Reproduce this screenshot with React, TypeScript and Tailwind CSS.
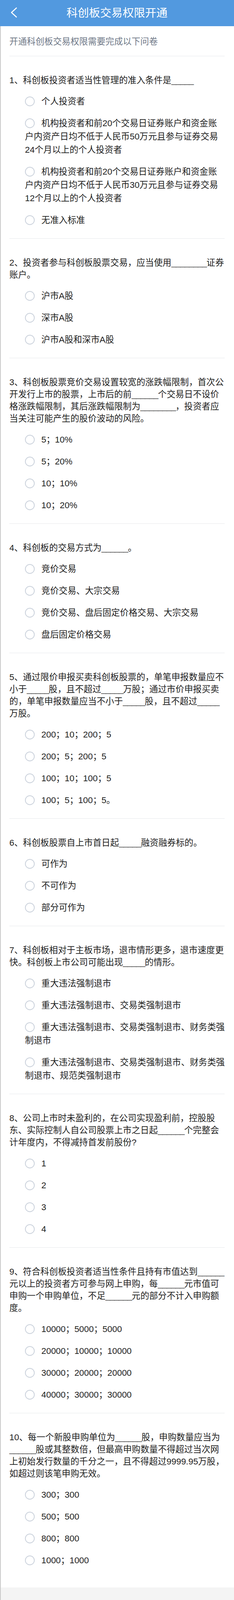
import React from "react";

type Q = { title: string; options: string[] };

const questions: Q[] = [
  {
    title: "1、科创板投资者适当性管理的准入条件是_____",
    options: [
      "个人投资者",
      "机构投资者和前20个交易日证券账户和资金账户内资产日均不低于人民币50万元且参与证券交易24个月以上的个人投资者",
      "机构投资者和前20个交易日证券账户和资金账户内资产日均不低于人民币30万元且参与证券交易12个月以上的个人投资者",
      "无准入标准",
    ],
  },
  {
    title: "2、投资者参与科创板股票交易，应当使用________证券账户。",
    options: ["沪市A股", "深市A股", "沪市A股和深市A股"],
  },
  {
    title:
      "3、科创板股票竞价交易设置较宽的涨跌幅限制，首次公开发行上市的股票，上市后的前______个交易日不设价格涨跌幅限制，其后涨跌幅限制为________，投资者应当关注可能产生的股价波动的风险。",
    options: ["5；10%", "5；20%", "10；10%", "10；20%"],
  },
  {
    title: "4、科创板的交易方式为______。",
    options: [
      "竞价交易",
      "竞价交易、大宗交易",
      "竞价交易、盘后固定价格交易、大宗交易",
      "盘后固定价格交易",
    ],
  },
  {
    title:
      "5、通过限价申报买卖科创板股票的，单笔申报数量应不小于_____股，且不超过_____万股；通过市价申报买卖的，单笔申报数量应当不小于_____股，且不超过_____万股。",
    options: ["200；10；200；5", "200；5；200；5", "100；10；100；5", "100；5；100；5。"],
  },
  {
    title: "6、科创板股票自上市首日起_____融资融券标的。",
    options: ["可作为", "不可作为", "部分可作为"],
  },
  {
    title: "7、科创板相对于主板市场，退市情形更多，退市速度更快。科创板上市公司可能出现_____的情形。",
    options: [
      "重大违法强制退市",
      "重大违法强制退市、交易类强制退市",
      "重大违法强制退市、交易类强制退市、财务类强制退市",
      "重大违法强制退市、交易类强制退市、财务类强制退市、规范类强制退市",
    ],
  },
  {
    title:
      "8、公司上市时未盈利的，在公司实现盈利前，控股股东、实际控制人自公司股票上市之日起______个完整会计年度内，不得减持首发前股份?",
    options: ["1", "2", "3", "4"],
  },
  {
    title:
      "9、符合科创板投资者适当性条件且持有市值达到______元以上的投资者方可参与网上申购，每______元市值可申购一个申购单位，不足______元的部分不计入申购额度。",
    options: ["10000；5000；5000", "20000；10000；10000", "30000；20000；20000", "40000；30000；30000"],
  },
  {
    title:
      "10、每一个新股申购单位为______股，申购数量应当为______股或其整数倍，但最高申购数量不得超过当次网上初始发行数量的千分之一，且不得超过9999.95万股，如超过则该笔申购无效。",
    options: ["300；300", "500；500", "800；800", "1000；1000"],
  },
];

function Title({ text }: { text: string }) {
  const parts = text.split(/(_+)/);
  return (
    <>
      {parts.map((p, i) =>
        p.startsWith("_") ? (
          <span key={i} className="tracking-[-1.2px]">
            {p}
          </span>
        ) : (
          <React.Fragment key={i}>{p}</React.Fragment>
        )
      )}
    </>
  );
}

export default function App() {
  return (
    <div className="w-[600px] font-['Liberation_Sans','Noto_Sans_CJK_SC',sans-serif] text-[#222]">
      <header className="h-[67px] bg-[#5299df] flex items-center relative">
        <svg
          className="absolute left-[27px] top-[19px]"
          width="17"
          height="26"
          viewBox="0 0 17 26"
          fill="none"
        >
          <polyline
            points="15,1.5 2.5,13 15,24.5"
            stroke="#ffffff"
            strokeWidth="2.6"
            strokeLinecap="round"
            strokeLinejoin="round"
          />
        </svg>
        <h1 className="flex-1 text-center text-white text-[28.8px] leading-none font-normal">
          科创板交易权限开通
        </h1>
      </header>

      <main className="bg-white shadow-[inset_2px_0_0_#c9c9c9]">
        <div className="px-6">
          <p className="pt-[25px] pb-[21px] leading-[30px] text-[22.4px] text-[#6f7887] border-b border-[#e6e8eb]">
            开通科创板交易权限需要完成以下问卷
          </p>
        </div>

        {questions.map((q, qi) => {
          const last = qi === questions.length - 1;
          return (
            <section key={qi} className="px-6">
              <div
                className={
                  last
                    ? "pt-[46px] pb-[41px]"
                    : "pt-[46px] pb-[18px] border-b border-[#e6e8eb]"
                }
              >
                <p className="text-[22.4px] leading-[31px] -mr-[2px]">
                  <Title text={q.title} />
                </p>
                <ul className="mt-[11px] pl-[40px] -mr-[2px]">
                  {q.options.map((o, oi) => (
                    <li key={oi} className="py-[11px] text-[22.4px] leading-[34px]">
                      <span className="inline-block w-[25px] h-[25px] rounded-full border-2 border-[#cbd2dc] bg-white align-middle mr-[17px] relative -top-[2px]" />
                      {o}
                    </li>
                  ))}
                </ul>
              </div>
            </section>
          );
        })}
      </main>

      <footer className="bg-[#f4f4f4] px-6 pt-[33px] pb-[34px] shadow-[inset_2px_0_0_#c9c9c9]">
        <button
          type="button"
          className="w-full h-[72px] rounded-[5px] bg-[#5299de] text-white text-[25px] flex items-center justify-center"
        >
          提 交
        </button>
      </footer>
    </div>
  );
}
